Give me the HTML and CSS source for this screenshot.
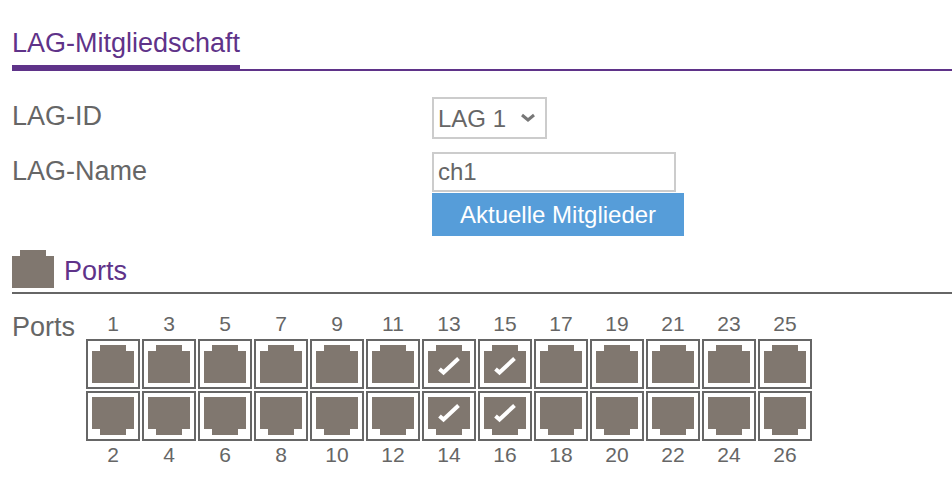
FILE: index.html
```html
<!DOCTYPE html>
<html lang="de">
<head>
  <meta charset="UTF-8" />
  <title>LAG-Mitgliedschaft</title>
  <link rel="stylesheet" href="styles.css">
</head>
<body>
  <svg class="symbols" aria-hidden="true">
    <symbol id="port" viewBox="0 0 42 38">
      <path d="M8 0H34V6H42V38H0V6H8Z" fill="#80776f" />
    </symbol>
  </svg>

  <header class="page-title">
    <h1>LAG-Mitgliedschaft</h1>
  </header>

  <main>
    <form class="lag-form">
      <div class="row">
        <label for="lagId">LAG-ID</label>
        <div class="select">
          <select id="lagId">
            <option>LAG 1</option>
          </select>
          <svg class="arrow" viewBox="0 0 16 10"><path d="M2 2 8 7 14 2" /></svg>
        </div>
      </div>
      <div class="row">
        <label for="lagName">LAG-Name</label>
        <div class="field">
          <input type="text" id="lagName" value="ch1" />
          <button type="button">Aktuelle Mitglieder</button>
        </div>
      </div>
    </form>

    <section>
      <h2><svg class="port-icon"><use href="#port" /></svg>Ports</h2>
      <div class="ports">
        <span class="ports-label">Ports</span>
        <div class="port-grid" id="portGrid"></div>
      </div>
    </section>
  </main>

  <script>
    const PORTS = 26;
    const members = [13, 14, 15, 16];

    function portBox(n) {
      return `
        <span class="port-box">
          <input type="checkbox" id="port${n}" ${members.includes(n) ? 'checked' : ''} />
          <svg class="port-icon"><use href="#port" /></svg>
          <svg class="check" viewBox="0 0 42 38"><path d="M11.5 24 15.5 27.5 30.5 13.5" /></svg>
        </span>`;
    }

    const grid = document.getElementById('portGrid');
    for (let n = 1; n <= PORTS; n += 2) {
      const col = document.createElement('div');
      col.className = 'port-pair';
      col.innerHTML = `
        <label class="port odd"><span class="number">${n}</span>${portBox(n)}</label>
        <label class="port even">${portBox(n + 1)}<span class="number">${n + 1}</span></label>
      `;
      grid.appendChild(col);
    }
  </script>
</body>
</html>
```

FILE: styles.css
```css
:root {
  --purple: #5f3389;
  --gray: #666;
  --border: #ccc;
  --blue: #569dd9;
}

* {
  box-sizing: border-box;
}

body {
  margin: 0;
  padding: 27px 0 20px 12px;
  font-family: "Liberation Sans", Arial, sans-serif;
  font-size: 27px;
  color: var(--gray);
  background: #fff;
}

.symbols {
  display: none;
}

.page-title {
  display: flex;
  border-bottom: 2px solid var(--purple);
}

h1 {
  margin: 0 0 -2px;
  padding-bottom: 6px;
  border-bottom: 6px solid var(--purple);
  font-size: 27px;
  font-weight: normal;
  line-height: 32px;
  color: var(--purple);
}

.lag-form {
  display: flex;
  flex-direction: column;
  gap: 13px;
  margin-top: 26px;
}

.row {
  display: grid;
  grid-template-columns: 420px 1fr;
  align-items: start;
}

.row label {
  line-height: 38px;
}

.select {
  position: relative;
  width: 115px;
}

select,
input[type="text"],
button {
  display: block;
  margin: 0;
  border-radius: 0;
  font-family: inherit;
  font-size: 24px;
  color: var(--gray);
}

select {
  appearance: none;
  width: 100%;
  height: 42px;
  padding: 0 4px;
  border: 2px solid var(--border);
  background: #fff;
}

.arrow {
  position: absolute;
  right: 11px;
  top: 16px;
  width: 16px;
  height: 10px;
  fill: none;
  stroke: #777;
  stroke-width: 3;
  pointer-events: none;
}

.field {
  display: flex;
  flex-direction: column;
  align-items: flex-start;
  gap: 1px;
}

input[type="text"] {
  width: 244px;
  height: 40px;
  padding: 0 4px;
  border: 2px solid var(--border);
}

button {
  padding: 0 28px;
  border: none;
  line-height: 43px;
  color: #fff;
  background: var(--blue);
  cursor: pointer;
}

h2 {
  display: flex;
  align-items: flex-start;
  gap: 10px;
  margin: 14px 0 0;
  border-bottom: 2px solid var(--gray);
  font-size: 27px;
  font-weight: normal;
  line-height: 42px;
  color: var(--purple);
}

.port-icon {
  width: 42px;
  height: 38px;
}

.ports {
  display: flex;
  margin-top: 15px;
}

.ports-label {
  flex: 0 0 74px;
  line-height: 36px;
}

.port-grid {
  display: flex;
  gap: 2px;
}

.port-pair {
  display: flex;
  flex-direction: column;
  gap: 2px;
}

.port {
  display: flex;
  flex-direction: column;
  cursor: pointer;
}

.number {
  font-size: 21px;
  line-height: 30px;
  text-align: center;
}

.even .number {
  line-height: 28px;
}

/* checkbox, socket and tick share one cell */
.port-box {
  display: grid;
  place-items: center;
}

.port-box > * {
  grid-area: 1 / 1;
}

.port-box input {
  appearance: none;
  width: 54px;
  height: 50px;
  margin: 0;
  border: 2px solid var(--gray);
}

.even .port-icon {
  transform: scaleY(-1);
}

.check {
  display: none;
  z-index: 1;
  width: 42px;
  height: 38px;
  fill: none;
  stroke: #fff;
  stroke-width: 4;
}

.even .check {
  margin-bottom: 10px;
}

input:checked ~ .check {
  display: block;
}
```
